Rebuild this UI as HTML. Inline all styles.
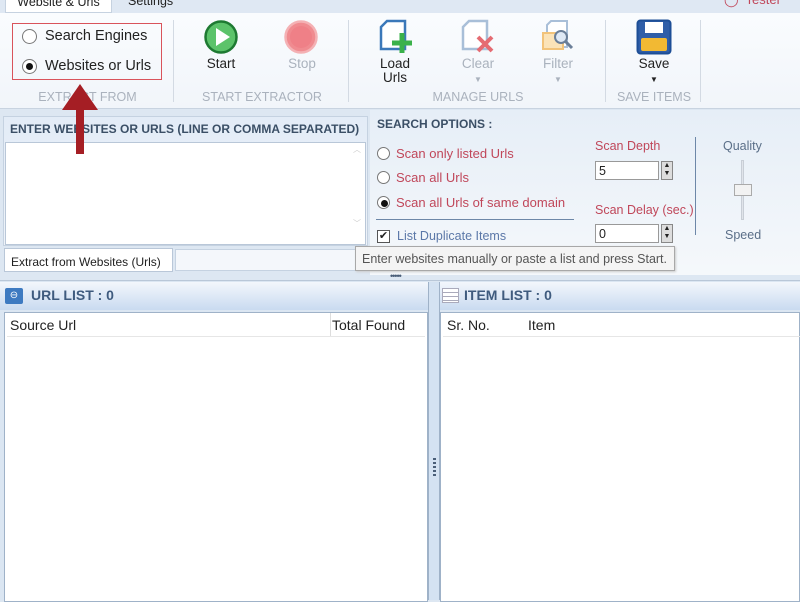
<!DOCTYPE html>
<html><head><meta charset="utf-8"><style>
*{box-sizing:border-box;margin:0;padding:0}
body{width:800px;height:600px;overflow:hidden;background:#dde7f2;font-family:"Liberation Sans",sans-serif;position:relative;font-size:13px;color:#222}
.a{position:absolute}
.sep{position:absolute;width:1px;background:#d3dae3;top:20px;height:82px}
.gl{position:absolute;top:90px;color:#aab2bd;font-size:12.5px;text-align:center}
.bl{position:absolute;text-align:center;font-size:13.5px;line-height:14px}
.radio{position:absolute;width:15px;height:15px;border:1px solid #777;border-radius:50%;background:#fff}
.radio.on::after{content:"";position:absolute;left:3px;top:3px;width:7px;height:7px;border-radius:50%;background:#111}
.red{color:#c0475a}
</style></head><body>
<!-- tab strip -->
<div class="a" style="left:0;top:0;width:800px;height:13px;background:#dfe8f3"></div>
<div class="a" style="left:5px;top:-6px;width:107px;height:19px;background:#fff;border:1px solid #c6d2e0;font-size:12.5px;text-align:center;line-height:14px">Website &amp; Urls</div>
<div class="a" style="left:128px;top:-6px;font-size:12.5px;line-height:14px">Settings</div>
<div class="a" style="left:724px;top:-8px;font-size:13px;color:#c0475a">&#9711;&nbsp; Tester</div>
<!-- ribbon -->
<div class="a" style="left:0;top:13px;width:800px;height:96px;background:linear-gradient(#fafcfe,#f1f5fa);border-bottom:1px solid #c8d3e0"></div>
<div class="a" style="left:12px;top:23px;width:150px;height:57px;border:1.5px solid #d9535b"></div>
<div class="radio" style="left:22px;top:29px"></div><div class="a" style="left:45px;top:28px;font-size:14.5px">Search Engines</div>
<div class="radio on" style="left:22px;top:59px"></div><div class="a" style="left:45px;top:58px;font-size:14.5px">Websites or Urls</div>
<div class="gl" style="left:10px;width:155px">EXTRACT FROM</div>
<div class="sep" style="left:173px"></div>
<svg class="a" style="left:203px;top:19px" width="36" height="36"><circle cx="18" cy="18" r="15.5" fill="#5cc36a" stroke="#1e7a32" stroke-width="2.5"/><path d="M13 9 L27 18 L13 27Z" fill="#fff"/></svg>
<div class="bl" style="left:196px;top:57px;width:50px">Start</div>
<svg class="a" style="left:283px;top:19px" width="36" height="36"><circle cx="18" cy="18" r="15.5" fill="#f08b90" stroke="#f4b1b4" stroke-width="2.5"/><circle cx="18" cy="18" r="11" fill="#ef8087"/></svg>
<div class="bl" style="left:277px;top:57px;width:50px;color:#aab2bd">Stop</div>
<div class="gl" style="left:178px;width:168px">START EXTRACTOR</div>
<div class="sep" style="left:348px"></div>
<svg class="a" style="left:378px;top:19px" width="38" height="36"><path d="M3 8 L9 2 H27 V30 H3Z" fill="#fff" stroke="#3b78b9" stroke-width="2.5"/><path d="M24 14 V34 M14 24 H34" stroke="#3ab14a" stroke-width="5"/></svg>
<div class="bl" style="left:370px;top:57px;width:50px">Load<br>Urls</div>
<svg class="a" style="left:460px;top:19px" width="38" height="36"><path d="M3 8 L9 2 H27 V30 H3Z" fill="#fff" stroke="#a9bfd8" stroke-width="2.5"/><path d="M18 18 L32 32 M32 18 L18 32" stroke="#e56b72" stroke-width="4"/></svg>
<div class="bl" style="left:453px;top:57px;width:50px;color:#aab2bd">Clear<br><span style="font-size:8px">▼</span></div>
<svg class="a" style="left:541px;top:19px" width="38" height="36"><path d="M6 6 L10 2 H26 V28 H6Z" fill="#fff" stroke="#a9bfd8" stroke-width="2"/><rect x="2" y="14" width="20" height="16" fill="#fbe3b8" stroke="#f2c37a" stroke-width="2"/><circle cx="20" cy="18" r="6" fill="#dfe9f5" stroke="#6b7f98" stroke-width="2"/><path d="M24 22 L31 29" stroke="#6b7f98" stroke-width="3"/></svg>
<div class="bl" style="left:533px;top:57px;width:50px;color:#aab2bd">Filter<br><span style="font-size:8px">▼</span></div>
<div class="gl" style="left:400px;width:156px">MANAGE URLS</div>
<div class="sep" style="left:605px"></div>
<svg class="a" style="left:636px;top:19px" width="36" height="36"><rect x="1.5" y="1.5" width="33" height="33" rx="3" fill="#2f5ea8" stroke="#1d4e96" stroke-width="2"/><rect x="9" y="3" width="18" height="11" fill="#fff"/><rect x="5" y="19" width="26" height="13" rx="2" fill="#f2b933"/></svg>
<div class="bl" style="left:629px;top:57px;width:50px">Save<br><span style="font-size:8px">▼</span></div>
<div class="gl" style="left:610px;width:88px">SAVE ITEMS</div>
<div class="sep" style="left:700px"></div>
<!-- left input panel -->
<div class="a" style="left:3px;top:116px;width:365px;height:130px;background:linear-gradient(#e3ecf7,#eef3f9);border:1px solid #c5d2e1"></div>
<div class="a" style="left:10px;top:122px;font-size:12px;color:#3b4f66;font-weight:bold">ENTER WEBSITES OR URLS (LINE OR COMMA SEPARATED)</div>
<div class="a" style="left:5px;top:142px;width:361px;height:103px;background:#fff;border:1px solid #b9c7d8"></div>
<div class="a" style="left:349px;top:144px;width:16px;height:99px;color:#ccc;font-size:8px;text-align:center">︿<br><br><br><br><br><br><br><br>﹀</div>
<div class="a" style="left:4px;top:248px;width:169px;height:24px;background:#fff;border:1px solid #b9c7d8;font-size:12px;padding:6px 0 0 6px">Extract from Websites (Urls)</div>
<div class="a" style="left:175px;top:249px;width:190px;height:22px;background:#f4f7fb;border:1px solid #c5d2e1"></div>
<!-- search options -->
<div class="a" style="left:370px;top:110px;width:430px;height:165px;background:linear-gradient(#e6eef7,#f5f8fb)"></div>
<div class="a" style="left:377px;top:117px;font-size:12px;color:#3b4f66;font-weight:bold">SEARCH OPTIONS :</div>
<div class="radio" style="left:377px;top:147px;width:13px;height:13px"></div><div class="a red" style="left:396px;top:146px;font-size:13px">Scan only listed Urls</div>
<div class="radio" style="left:377px;top:171px;width:13px;height:13px"></div><div class="a red" style="left:396px;top:170px;font-size:13px">Scan all Urls</div>
<div class="radio on" style="left:377px;top:196px;width:13px;height:13px"></div><div class="a red" style="left:396px;top:195px;font-size:13px">Scan all Urls of same domain</div>
<div class="a" style="left:376px;top:219px;width:198px;height:1px;background:#6d87a8"></div>
<div class="a" style="left:377px;top:230px;width:13px;height:13px;border:1px solid #555;background:#fff;font-size:11px;line-height:11px;text-align:center">✔</div>
<div class="a" style="left:397px;top:229px;font-size:12.5px;color:#5b78a8">List Duplicate Items</div>
<div class="a red" style="left:595px;top:139px;font-size:12.5px">Scan Depth</div>
<div class="a" style="left:595px;top:161px;width:64px;height:19px;background:#fff;border:1px solid #999;font-size:12.5px;padding:2px 3px">5</div>
<div class="a" style="left:661px;top:161px;width:12px;height:19px;background:#ddd;border:1px solid #888;font-size:7px;line-height:8px;text-align:center">▲<br>▼</div>
<div class="a red" style="left:595px;top:203px;font-size:12.5px">Scan Delay (sec.)</div>
<div class="a" style="left:595px;top:224px;width:64px;height:19px;background:#fff;border:1px solid #999;font-size:12.5px;padding:2px 3px">0</div>
<div class="a" style="left:661px;top:224px;width:12px;height:19px;background:#ddd;border:1px solid #888;font-size:7px;line-height:8px;text-align:center">▲<br>▼</div>
<div class="a" style="left:695px;top:137px;width:1px;height:98px;background:#6d87a8"></div>
<div class="a" style="left:723px;top:139px;font-size:12.5px;color:#5b6f88">Quality</div>
<div class="a" style="left:741px;top:160px;width:3px;height:60px;background:#e0e4ea;border:1px solid #c8ced6"></div>
<div class="a" style="left:734px;top:184px;width:18px;height:12px;background:#f2f2f2;border:1px solid #aaa"></div>
<div class="a" style="left:725px;top:228px;font-size:12.5px;color:#5b6f88">Speed</div>
<!-- tooltip -->
<div class="a" style="left:355px;top:246px;width:320px;height:25px;background:#f4f4f4;border:1px solid #a8a8a8;font-size:12.5px;color:#555;padding:5px 0 0 6px;box-shadow:1px 1px 2px #ccc">Enter websites manually or paste a list and press Start.</div>
<div class="a" style="left:390px;top:271px;font-size:9px;color:#4a5e78;letter-spacing:-1px">•••••</div>
<!-- lower panels -->
<div class="a" style="left:0;top:280px;width:800px;height:320px;background:#dbe6f2;border-top:1px solid #b9c7d8"></div>
<div class="a" style="left:0;top:282px;width:430px;height:28px;background:linear-gradient(#f3f7fc,#c9dbf0)"></div>
<div class="a" style="left:5px;top:288px;width:18px;height:16px;background:#3d7ac1;border-radius:2px;color:#fff;font-size:10px;text-align:center;line-height:16px">⊖</div>
<div class="a" style="left:31px;top:287px;font-size:14px;font-weight:bold;color:#3f5b7e">URL LIST : 0</div>
<div class="a" style="left:4px;top:312px;width:424px;height:290px;background:#fff;border:1px solid #9fb2c8"></div>
<div class="a" style="left:10px;top:317px;font-size:14px">Source Url</div>
<div class="a" style="left:330px;top:313px;width:1px;height:23px;background:#ddd"></div>
<div class="a" style="left:332px;top:317px;font-size:14px">Total Found</div>
<div class="a" style="left:7px;top:336px;width:418px;height:1px;background:#e6e6e6"></div>
<div class="a" style="left:428px;top:282px;width:12px;height:318px;background:#d4e2f2;border-left:1px solid #9fb2c8;border-right:1px solid #9fb2c8"></div>
<div class="a" style="left:433px;top:458px;width:3px;height:20px;background:repeating-linear-gradient(#4a5e78 0 2px,transparent 2px 4px)"></div>
<div class="a" style="left:440px;top:282px;width:360px;height:28px;background:linear-gradient(#f3f7fc,#c9dbf0)"></div>
<div class="a" style="left:442px;top:288px;width:17px;height:15px;border:1px solid #aab;background:repeating-linear-gradient(#fff 0 3px,#aab 3px 4px)"></div>
<div class="a" style="left:464px;top:287px;font-size:14px;font-weight:bold;color:#3f5b7e">ITEM LIST : 0</div>
<div class="a" style="left:440px;top:312px;width:360px;height:290px;background:#fff;border:1px solid #9fb2c8"></div>
<div class="a" style="left:447px;top:317px;font-size:14px">Sr. No.</div>
<div class="a" style="left:528px;top:317px;font-size:14px">Item</div>
<div class="a" style="left:443px;top:336px;width:357px;height:1px;background:#e6e6e6"></div>
<!-- arrow -->
<svg class="a" style="left:58px;top:82px" width="44" height="72"><path d="M22 2 L40 28 H26 V72 H18 V28 H4Z" fill="#a51e24"/></svg>
</body></html>
